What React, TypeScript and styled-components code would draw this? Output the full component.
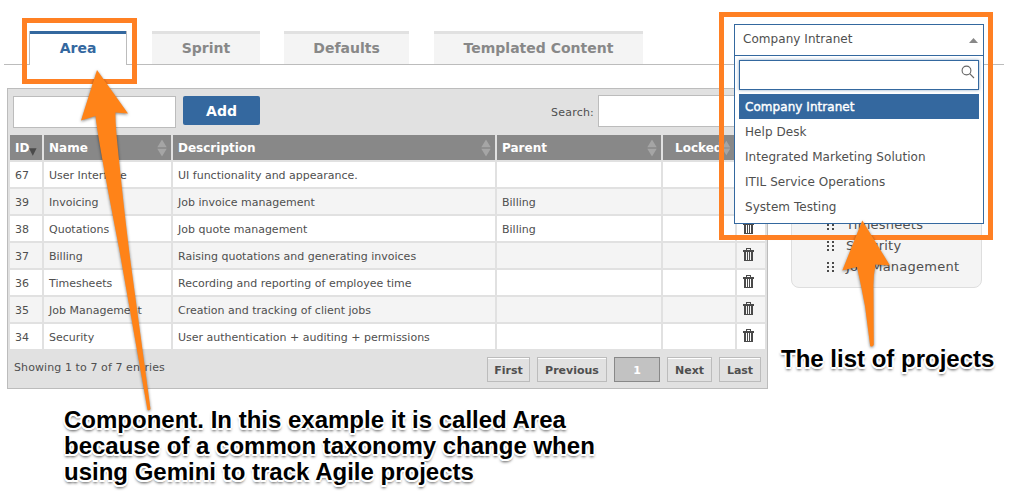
import React from "react";
import styled, { createGlobalStyle } from "styled-components";

const Global = createGlobalStyle`
  * { box-sizing: border-box; }
  body { margin: 0; background: #fff; overflow: hidden; }
`;

const UI = `"DejaVu Sans", Verdana, sans-serif`;

const Page = styled.div`
  position: relative;
  width: 1011px;
  height: 500px;
  overflow: hidden;
  background: #fff;
  font-family: ${UI};
  font-size: 11px;
  color: #4f4f4f;
  white-space: nowrap;
`;

const Tabs = styled.nav`
  display: flex;
  align-items: flex-end;
  height: 65px;
  width: 1000px;
  margin-left: 4px;
  padding-left: 25px;
  border-bottom: 1px solid #bcbcbc;
`;

const Tab = styled.div<{ $w: number; $gap: number; $active?: boolean }>`
  width: ${(p) => p.$w}px;
  height: ${(p) => (p.$active ? 34 : 33)}px;
  margin-right: ${(p) => p.$gap}px;
  margin-bottom: ${(p) => (p.$active ? -1 : 0)}px;
  padding-top: 5px;
  border: solid #bcbcbc;
  border-width: 0 ${(p) => (p.$active ? 1 : 0)}px;
  box-shadow: inset 0 3px 0 ${(p) => (p.$active ? "#34689f" : "#e1e1e1")};
  background: ${(p) => (p.$active ? "#fff" : "#f4f4f4")};
  color: ${(p) => (p.$active ? "#34689f" : "#888")};
  font-size: 14px;
  font-weight: bold;
  line-height: 24px;
  text-align: center;
`;

const Content = styled.div`
  display: flex;
  align-items: flex-start;
  gap: 23px;
  padding: 23px 0 0 7px;
`;

const Panel = styled.section`
  width: 761px;
  height: 301px;
  padding: 6px 2px 0;
  border: 1px solid #bcbcbc;
  background: #e1e1e1;
`;

const Toolbar = styled.div`
  display: flex;
  align-items: flex-start;
  height: 40px;
  padding: 0 3px;
`;

const Field = styled.div<{ $w: number; $top?: number }>`
  width: ${(p) => p.$w}px;
  height: 32px;
  margin-top: ${(p) => p.$top ?? 0}px;
  border: 1px solid #bcbcbc;
  background: #fff;
`;

const AddButton = styled.div`
  width: 77px;
  height: 29px;
  margin: 1px auto 0 7px;
  border-radius: 2px;
  background: #34689f;
  color: #fff;
  font-size: 14px;
  font-weight: bold;
  line-height: 30px;
  text-align: center;
`;

const SearchLabel = styled.span`
  margin-right: 4px;
  line-height: 35px;
  letter-spacing: 0.2px;
`;

const Grid = styled.div`
  display: grid;
  grid-template-columns: 32px 127px 322px 164px 72px 28px;
  grid-auto-rows: 25px;
  gap: 2px;
`;

const Head = styled.div<{ $center?: boolean }>`
  display: flex;
  align-items: center;
  justify-content: space-between;
  padding: 0 4px 0 ${(p) => (p.$center ? 12 : 5)}px;
  background: #888;
  color: #fff;
  font-size: 12px;
  font-weight: bold;
`;

const Cell = styled.div<{ $alt: boolean }>`
  padding-left: 5px;
  background: ${(p) => (p.$alt ? "#f4f4f4" : "#fff")};
  line-height: 27px;
  svg { display: block; margin: 5px 0 0 1px; }
`;

const Footer = styled.div`
  display: flex;
  align-items: flex-start;
  padding: 8px 4px 0;
`;

const Info = styled.span`
  margin-right: auto;
  line-height: 21px;
  letter-spacing: 0.09px;
`;

const PageButton = styled.div<{ $w: number; $on?: boolean }>`
  width: ${(p) => p.$w}px;
  height: 25px;
  margin-left: 7px;
  border: 1px solid ${(p) => (p.$on ? "#888" : "#bcbcbc")};
  background: ${(p) => (p.$on ? "#c2c2c2" : "#e1e1e1")};
  box-shadow: ${(p) => (p.$on ? "none" : "inset 0 1px 0 #fff")};
  color: ${(p) => (p.$on ? "#fff" : "#4f4f4f")};
  font-weight: bold;
  line-height: 25px;
  text-align: center;
`;

const SideCard = styled.aside`
  display: flex;
  flex-direction: column;
  justify-content: flex-end;
  width: 191px;
  height: 200px;
  padding: 0 0 10px 35px;
  border: 1px solid #dedede;
  border-radius: 8px;
  background: #f4f4f4;
  font-size: 13px;
  letter-spacing: 0.25px;
`;

const SideItem = styled.div`
  display: flex;
  align-items: center;
  gap: 11px;
  height: 21px;
`;

const Select = styled.div`
  position: absolute;
  left: 734px;
  top: 24px;
  width: 250px;
  height: 200px;
  border: 1px solid #34689f;
  background: #fff;
  font-size: 12px;
  letter-spacing: 0.05px;
`;

const Selected = styled.div`
  display: flex;
  align-items: center;
  justify-content: space-between;
  height: 31px;
  padding: 0 5px 2px 8px;
  border-bottom: 1px solid #34689f;
  svg { margin-top: 3px; }
`;

const Filter = styled.div`
  display: flex;
  justify-content: flex-end;
  height: 30px;
  margin: 4px 4px 4px;
  padding: 4px 3px 0;
  border: 1px solid #34689f;
  box-shadow: 0 0 3px rgba(52, 104, 159, 0.6);
`;

const Option = styled.div<{ $on?: boolean }>`
  height: 25px;
  margin: 0 4px;
  padding-left: 6px;
  background: ${(p) => (p.$on ? "#34689f" : "transparent")};
  color: ${(p) => (p.$on ? "#fff" : "#4f4f4f")};
  -webkit-text-stroke: ${(p) => (p.$on ? "0.4px #fff" : "0")};
  line-height: 27px;
`;

const Highlight = styled.div<{ $x: number; $y: number; $w: number; $h: number }>`
  position: absolute;
  left: ${(p) => p.$x}px;
  top: ${(p) => p.$y}px;
  width: ${(p) => p.$w}px;
  height: ${(p) => p.$h}px;
  border: 5px solid #ff8023;
`;

const Arrows = styled.svg`
  position: absolute;
  inset: 0;
  filter: drop-shadow(0 1px 1.5px rgba(0, 0, 0, 0.5));
`;

const Note = styled.div<{ $x: number; $y: number }>`
  position: absolute;
  left: ${(p) => p.$x}px;
  top: ${(p) => p.$y}px;
  color: #000;
  font-family: "Liberation Sans", Arial, sans-serif;
  font-size: 24px;
  font-weight: bold;
  line-height: 26px;
  text-shadow: 2px 0 #fff, -2px 0 #fff, 0 2px #fff, 0 -2px #fff, 1px 2px #fff,
    -1px 2px #fff, 0 3px 3px rgba(0, 0, 0, 0.7);
`;

const Sort = () => (
  <svg width="10" height="18" viewBox="0 0 10 18">
    <path d="M5 0.5 9.7 8.3H.3zM5 17.5 9.7 9.7H.3z" fill="#a5a5a5" />
  </svg>
);

const SortDown = () => (
  <svg width="8" height="8" viewBox="0 0 8 8">
    <path d="M0 0h8L4 8z" fill="#4a4a4a" />
  </svg>
);

const IdHead = styled(Head)`
  padding-right: 5px;
  justify-content: flex-start;
  svg { margin: 8px 0 0 0; }
`;

const Trash = () => (
  <svg width="11" height="14" viewBox="0 0 11 14" fill="#4a4a4a" shapeRendering="crispEdges">
    <path d="M3 0h5v2h3v2H0V2h3zM4 1v1h3V1z" fillRule="evenodd" />
    <path d="M1 4h9v9H1zM3 4v8h1V4zM5 4v8h1V4zM7 4v8h1V4z" fillRule="evenodd" />
  </svg>
);

const Grip = () => (
  <svg width="8" height="10" viewBox="0 0 8 10" fill="#4a4a4a" shapeRendering="crispEdges">
    <path d="M0 0h2v2H0zM5 0h2v2H5zM0 4h2v2H0zM5 4h2v2H5zM0 8h2v2H0zM5 8h2v2H5z" />
  </svg>
);

const rows = [
  ["67", "User Interface", "UI functionality and appearance.", ""],
  ["39", "Invoicing", "Job invoice management", "Billing"],
  ["38", "Quotations", "Job quote management", "Billing"],
  ["37", "Billing", "Raising quotations and generating invoices", ""],
  ["36", "Timesheets", "Recording and reporting of employee time", ""],
  ["35", "Job Management", "Creation and tracking of client jobs", ""],
  ["34", "Security", "User authentication + auditing + permissions", ""],
];

const projects = [
  "Company Intranet",
  "Help Desk",
  "Integrated Marketing Solution",
  "ITIL Service Operations",
  "System Testing",
];

export default function App() {
  return (
    <Page>
      <Global />
      <Tabs>
        <Tab $w={98} $gap={25} $active>Area</Tab>
        <Tab $w={108} $gap={24}>Sprint</Tab>
        <Tab $w={125} $gap={25}>Defaults</Tab>
        <Tab $w={209} $gap={0}>Templated Content</Tab>
      </Tabs>
      <Content>
        <Panel>
          <Toolbar>
            <Field $w={163} $top={1} />
            <AddButton>Add</AddButton>
            <SearchLabel>Search:</SearchLabel>
            <Field $w={164} />
          </Toolbar>
          <Grid>
            <IdHead>ID<SortDown /></IdHead>
            <Head>Name<Sort /></Head>
            <Head>Description<Sort /></Head>
            <Head>Parent<Sort /></Head>
            <Head $center>Locked<Sort /></Head>
            <Head />
            {rows.map((r, i) => (
              <React.Fragment key={r[0]}>
                {r.map((c, j) => (
                  <Cell key={j} $alt={i % 2 === 1}>{c}</Cell>
                ))}
                <Cell $alt={i % 2 === 1} />
                <Cell $alt={i % 2 === 1}><Trash /></Cell>
              </React.Fragment>
            ))}
          </Grid>
          <Footer>
            <Info>Showing 1 to 7 of 7 entries</Info>
            <PageButton $w={43}>First</PageButton>
            <PageButton $w={70}>Previous</PageButton>
            <PageButton $w={46} $on>1</PageButton>
            <PageButton $w={45}>Next</PageButton>
            <PageButton $w={42}>Last</PageButton>
          </Footer>
        </Panel>
        <SideCard>
          <SideItem><Grip />Timesheets</SideItem>
          <SideItem><Grip />Security</SideItem>
          <SideItem><Grip />Job Management</SideItem>
        </SideCard>
      </Content>

      <Select>
        <Selected>
          Company Intranet
          <svg width="9" height="5" viewBox="0 0 9 5"><path d="M4.5 0 9 5H0z" fill="#888" /></svg>
        </Selected>
        <Filter>
          <svg width="14" height="14" viewBox="0 0 14 14" fill="none" stroke="#666" strokeWidth="1.1">
            <circle cx="5.5" cy="5.5" r="4.4" />
            <path d="M8.7 8.7 13 13" />
          </svg>
        </Filter>
        {projects.map((p, i) => (
          <Option key={p} $on={i === 0}>{p}</Option>
        ))}
      </Select>

      <Highlight $x={22} $y={18} $w={115} $h={66} />
      <Highlight $x={719} $y={12} $w={274} $h={228} />
      <Arrows width="1011" height="500" viewBox="0 0 1011 500" fill="#ff8318">
        <path d="M97 70 128 113.5 115.5 112.5Q115 122 118 150 125 220 131 265L150.5 409Q149.500 411 147.500 410L119 248Q98 140 95.500 116L81 120.500z" />
        <path d="M862.300 220.500 890 265.500 875.500 264.500Q873 277 873.500 290L873.800 345Q872 347.500 870.200 346L865 306Q861 285 857 267L842.300 270.500z" />
      </Arrows>
      <Note $x={64} $y={407}>
        Component. In this example it is called Area<br />
        because of a common taxonomy change when<br />
        using Gemini to track Agile projects
      </Note>
      <Note $x={781} $y={346}>The list of projects</Note>
    </Page>
  );
}
